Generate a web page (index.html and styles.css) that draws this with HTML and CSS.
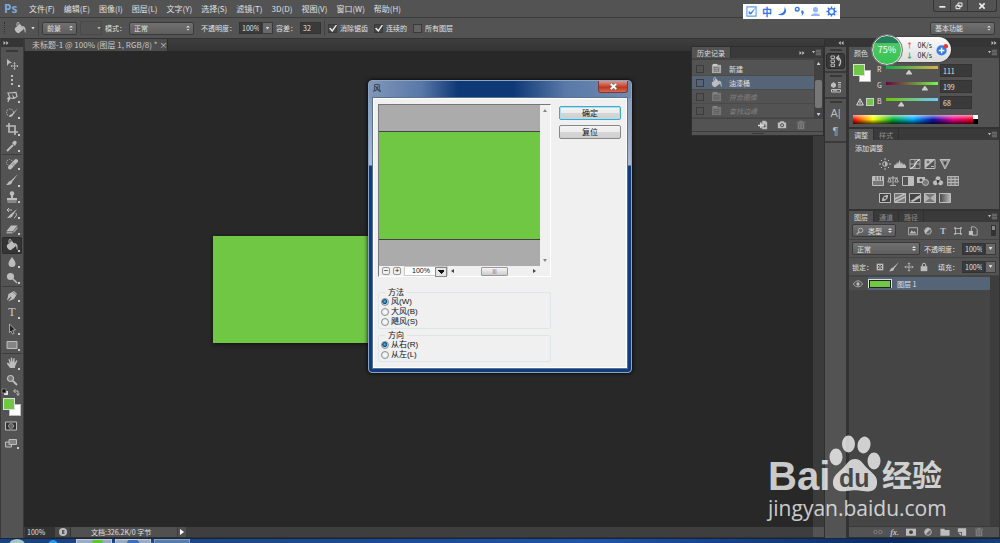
FILE: index.html
```html
<!DOCTYPE html>
<html lang="zh-CN">
<head>
<meta charset="utf-8">
<title>未标题-1 @ 100% (图层 1, RGB/8)</title>
<link rel="stylesheet" href="styles.css">
</head>
<body>
<svg class="defs" aria-hidden="true">
  <symbol id="i-move" viewBox="0 0 12 12"><path d="M1 1l5 4-3 .3L1 8z"/><path d="M8.500 4.500v7M5 8h7M7.500 5.500l1-1 1 1M7.500 10.500l1 1 1-1M6 7L5 8l1 1M11 7l1 1-1 1" fill="none" stroke="currentColor" stroke-width=".8"/></symbol>
  <symbol id="i-marquee" viewBox="0 0 12 12"><path d="M6 1v10" fill="none" stroke="currentColor" stroke-width="2" stroke-dasharray="2 2"/></symbol>
  <symbol id="i-lasso" viewBox="0 0 12 12"><path d="M2 2l8-.5 1 4-3 2-4-.5zM4 7c-2-1-3 1-1.500 1.500C4 9 4 7 3 7l-1 4" fill="none" stroke="currentColor" stroke-width="1.200"/><path d="M6 3l3 4-2 0z"/></symbol>
  <symbol id="i-quick" viewBox="0 0 12 12"><circle cx="4" cy="5.500" r="3.500" fill="none" stroke="currentColor" stroke-dasharray="1.500 1"/><path d="M12 1L7 8c-1 2-3 2-4 2 1-1 1-3 3-3z"/></symbol>
  <symbol id="i-crop" viewBox="0 0 12 12"><path d="M3 0v9h9M0 3h9v9" fill="none" stroke="currentColor" stroke-width="1.600"/></symbol>
  <symbol id="i-dropper" viewBox="0 0 12 12"><path d="M7 2c2-3 5 0 3 2L9 6 6 3z"/><path d="M7 5l-5 5-1 1" fill="none" stroke="currentColor" stroke-width="2"/></symbol>
  <symbol id="i-heal" viewBox="0 0 12 12"><circle cx="3.500" cy="4.500" r="3" fill="none" stroke="currentColor" stroke-dasharray="1.200 1"/><path d="M4 9.500l6-6.500" stroke="currentColor" stroke-width="4" stroke-linecap="round"/><path d="M5.500 6l3 3M7 4.500l2.500 2.500" stroke="#666" stroke-width=".7"/></symbol>
  <symbol id="i-brush" viewBox="0 0 12 12"><path d="M12 0L6 8c0 3-4 3-6 3 2-1 2-4 4.500-4z"/></symbol>
  <symbol id="i-stamp" viewBox="0 0 12 12"><circle cx="6" cy="2.500" r="2.300"/><path d="M5 4h2v3h4v2.500H1V7h4zM1.500 10.500h9v1h-9z"/></symbol>
  <symbol id="i-hbrush" viewBox="0 0 12 12"><path d="M11 2L7 8c-1 3-4 3-6 3 2-1 2-3 4-4z"/><path d="M1 3h5M3 1L1 3l2 2M10 6c1 2 0 4-2 5" fill="none" stroke="currentColor"/></symbol>
  <symbol id="i-eraser" viewBox="0 0 12 12"><path d="M5 2.500h6.500L7 8H.5z"/><path d="M.5 8.500h6v2h-6zM7.300 8.300L11.500 3.500v2.200l-4 4.600z" opacity=".75"/></symbol>
  <symbol id="i-bucket" viewBox="0 0 12 12"><path d="M1 6l5-4 4 5-5 4c-2 1-5-3-4-5z"/><path d="M5 5V1.500C5 0 3 0 3 1.500V4" fill="none" stroke="currentColor"/><path d="M8 4c3 0 4 2 3.500 7C10 10 11 7 9 6z"/></symbol>
  <symbol id="i-drop" viewBox="0 0 12 12"><path d="M6 1c1 2 3.500 4 3.500 6.500a3.500 3.500 0 0 1-7 0C2.500 5 5 3 6 1z"/></symbol>
  <symbol id="i-dodge" viewBox="0 0 12 12"><circle cx="4.500" cy="4.500" r="3.600"/><path d="M7 7l4 4" stroke="currentColor" stroke-width="1.500"/></symbol>
  <symbol id="i-pen" viewBox="0 0 12 12"><path d="M8 1l3 3-3 5-6 2.500 3.500-4-.8-.7L1 10.500 2.500 4z"/><path d="M7 2l4 3.500" stroke="#535353" stroke-width=".6"/></symbol>
  <symbol id="i-select" viewBox="0 0 12 12"><path d="M3.500 1l6 6-2.800.2L8 10.500l-1.500.6L5 8 3.500 9.500z" fill="#222" stroke="currentColor" stroke-width=".8"/></symbol>
  <symbol id="i-rect" viewBox="0 0 12 12"><path d="M1 2.500h10v7H1z" fill="#858585" stroke="currentColor"/></symbol>
  <symbol id="i-hand" viewBox="0 0 12 12"><path d="M4 11L.8 6.500c0-1 1.200-1 3 .8L2.500 2.500c.3-.8 1.200-.5 1.300 0L5 5.500 4.800 1c.4-.8 1.300-.6 1.400 0L6.600 5.500 7.500 1.500c.5-.7 1.300-.4 1.200.3L8.500 6l1.700-2.500c.8-.4 1.200.2 1 .8L9 9.500V11z"/></symbol>
  <symbol id="i-zoom" viewBox="0 0 12 12"><circle cx="4.500" cy="4.500" r="3" fill="#777" stroke="currentColor" stroke-width="1.200"/><path d="M7 7l4 4" stroke="currentColor" stroke-width="1.800"/></symbol>
  <symbol id="i-mask" viewBox="0 0 12 12"><path d="M.5 2h11v8H.5z" fill="#333" stroke="currentColor"/><circle cx="6" cy="6" r="2.500" fill="#666" stroke="currentColor" stroke-dasharray="1 .6"/></symbol>
  <symbol id="i-screen" viewBox="0 0 12 12"><path d="M.5 5h6v5h-6z" fill="#666" stroke="currentColor"/><path d="M4 2.500h7.500v5H4z" fill="#858585" stroke="currentColor"/></symbol>
  <symbol id="i-doc" viewBox="0 0 12 12"><path d="M1 2h10v9H1z" fill="#aaa"/><path d="M2 1h5v2H2z" fill="#ccc"/><path d="M3 4.500h6v5H3z" fill="#777"/><path d="M4 6h4M4 8h4" stroke="#bbb" stroke-width=".7"/></symbol>
  <symbol id="i-newdoc" viewBox="0 0 12 12"><path d="M5 1h4l2 2v8H5z" fill="#bbb"/><path d="M0 6.500h7M3.500 3v7" stroke="#ddd" stroke-width="1.800"/><path d="M8 5v4M6.500 7.500h3.500" stroke="#444" stroke-width=".8"/></symbol>
  <symbol id="i-camera" viewBox="0 0 12 12"><path fill-rule="evenodd" d="M1 3h2l1-1.500h4L9 3h2v7H1zM6 4a2.300 2.300 0 1 0 .1 0z"/><circle cx="6" cy="6.300" r="1.200"/></symbol>
  <symbol id="i-trash" viewBox="0 0 12 12"><path d="M2 4h8v7H2zM1 2h10v1.200H1zM4 1h4v1H4z" opacity=".8"/><path d="M4.500 5v5M7.500 5v5" stroke="#444" stroke-width=".8"/></symbol>
  <symbol id="i-history" viewBox="0 0 12 12"><path d="M1 1h3.500v2.500H1zM1 5h3.500v2.500H1zM1 9h3.500v2.500H1z" fill="none" stroke="currentColor" stroke-width=".9"/><path d="M7 3h2c2 2 2 5 0 8M9 .5L6.500 3 9 5.500" fill="none" stroke="currentColor" stroke-width="1.400"/></symbol>
  <symbol id="i-props" viewBox="0 0 12 12"><path d="M1 3l2.500-2L6 3v2.500L3.500 7 1 5.500zM8 1h3v1.200H8zM8 3.200h3v1.200H8zM8 5.400h3v1.200H8z"/><path d="M1.500 8.500h9v2.500h-9z" fill="none" stroke="currentColor"/><path d="M3 9.800h4" stroke="currentColor"/></symbol>
  <symbol id="i-sun" viewBox="0 0 12 12"><circle cx="6" cy="6" r="2.300" fill="none" stroke="currentColor"/><path d="M6 0v2M6 10v2M0 6h2M10 6h2M2 2l1 1M9 9l1 1M2 10l1-1M9 3l1-1" stroke="currentColor"/><path d="M6 4a2 2 0 0 1 0 4z"/></symbol>
  <symbol id="i-levels" viewBox="0 0 12 12"><path d="M0 10V8l1-2 1 1 1-3 1 2 1.500-4L7 6l1-2 1 3 1-1.500L12 8v2z"/></symbol>
  <symbol id="i-curves" viewBox="0 0 12 12"><path d="M1 1.500h10v9H1zM1 6h10M6 1.500v9" fill="none" stroke="currentColor" stroke-width=".8"/><path d="M1 10.500C7 10 5 3 11 1.500" fill="none" stroke="#ddd" stroke-width="1.200"/></symbol>
  <symbol id="i-expo" viewBox="0 0 12 12"><path d="M1 1.500h10v9H1z" fill="none" stroke="currentColor"/><path d="M1 10.500L11 1.500H1z"/><path d="M2.500 4h3M4 2.500v3" stroke="#444" stroke-width=".8"/><path d="M7 8.500h3" stroke="currentColor"/></symbol>
  <symbol id="i-vib" viewBox="0 0 12 12"><path d="M1 1.500h10L6 11z" fill="#999" stroke="currentColor"/><path d="M4 3.500h4L6 8z" fill="#444"/></symbol>
  <symbol id="i-hue" viewBox="0 0 12 12"><path d="M.5 1.500h11v9H.5z" fill="#777" stroke="currentColor"/><path d="M1 2h10v4H1z"/><path d="M4 1.500v4M7 1.500v4M9.500 1.500v4" stroke="#444" stroke-width=".8"/></symbol>
  <symbol id="i-balance" viewBox="0 0 12 12"><path d="M6 1v9M3 10.500h6M1 3h10M2.500 3L.8 7h3.500zM9.500 3L7.800 7h3.500z" fill="none" stroke="currentColor" stroke-width=".9"/></symbol>
  <symbol id="i-bw" viewBox="0 0 12 12"><path d="M.5 1.500h11v9H.5z" fill="none" stroke="currentColor"/><path d="M6 2h5v8H6z"/></symbol>
  <symbol id="i-photo" viewBox="0 0 12 12"><path d="M0 2h8v6H0z"/><circle cx="4" cy="5" r="1.500" fill="#444"/><circle cx="8.500" cy="7.500" r="3" fill="#777" stroke="currentColor"/></symbol>
  <symbol id="i-mixer" viewBox="0 0 12 12"><g stroke="#444" stroke-width=".8"><circle cx="6" cy="3.800" r="3"/><circle cx="3.500" cy="7.800" r="3"/><circle cx="8.500" cy="7.800" r="3"/></g><circle cx="6" cy="6.500" r="1.300" fill="#333"/></symbol>
  <symbol id="i-grid" viewBox="0 0 12 12"><path d="M.5 1.500h11v9H.5zM.5 4.500h11M.5 7.500h11M4 1.500v9M8 1.500v9" fill="#777" stroke="currentColor" stroke-width=".9"/></symbol>
  <symbol id="i-invert" viewBox="0 0 12 12"><path d="M.5 1.500h11v9H.5z" fill="#444" stroke="currentColor"/><path d="M3 9c0-4 2-6 6-6 0 4-2 6-6 6z"/><circle cx="6" cy="6" r="1.300" fill="#555"/></symbol>
  <symbol id="i-poster" viewBox="0 0 12 12"><path d="M.5 1.500h11v9H.5z" fill="#777" stroke="currentColor"/><path d="M1 7l10-5M1 10l10-5" stroke="currentColor" stroke-width="1.500"/></symbol>
  <symbol id="i-thresh" viewBox="0 0 12 12"><path d="M.5 1.500h11v9H.5z" fill="#444" stroke="currentColor"/><path d="M1 9l4-2 2-2 4-2v3L7 8l-3 2z"/></symbol>
  <symbol id="i-selcol" viewBox="0 0 12 12"><path d="M.5 1.500h11v9H.5z" fill="#777" stroke="currentColor"/><path d="M1 2l5 4-5 4zM11 2L6 6l5 4z" opacity=".8"/></symbol>
  <symbol id="i-gmap" viewBox="0 0 12 12"><linearGradient id="gm"><stop stop-color="#444"/><stop offset="1" stop-color="#bbb"/></linearGradient><path d="M.5 1.500h11v9H.5z" fill="url(#gm)" stroke="currentColor"/></symbol>
  <symbol id="i-image" viewBox="0 0 12 12"><path d="M.5 2h11v8.500H.5z" fill="none" stroke="currentColor"/><path d="M2 9l2.500-4 2 2.500L8 6l2 3z"/></symbol>
  <symbol id="i-half" viewBox="0 0 12 12"><circle cx="6" cy="6" r="4" fill="#666" stroke="currentColor"/><path d="M3 9a4.300 4.300 0 0 1 6-6z"/></symbol>
  <symbol id="i-shape" viewBox="0 0 12 12"><path d="M3 3h6v6H3z" fill="none" stroke="currentColor"/><path d="M1.500 1.500h2v2h-2zM8.500 1.500h2v2h-2zM1.500 8.500h2v2h-2zM8.500 8.500h2v2h-2z"/></symbol>
  <symbol id="i-smart" viewBox="0 0 12 12"><path d="M4 1h4l3 3v7H5V7H4z" fill="none" stroke="currentColor"/><path d="M1 6h5v5H1z"/></symbol>
  <symbol id="i-checker" viewBox="0 0 12 12"><path d="M1 1h10v10H1z"/><path d="M3 3h2v2H3zM7 3h2v2H7zM5 5h2v2H5zM3 7h2v2H3zM7 7h2v2H7z" fill="#444"/></symbol>
  <symbol id="i-arrows" viewBox="0 0 12 12"><path d="M6 1v10M1 6h10M4.500 2.500L6 1l1.500 1.500M4.500 9.500L6 11l1.500-1.500M2.500 4.500L1 6l1.500 1.500M9.500 4.500L11 6 9.500 7.500" fill="none" stroke="currentColor"/></symbol>
  <symbol id="i-lock" viewBox="0 0 12 12"><path d="M2 5h8v6H2z"/><path d="M4 5V3.500a2 2 0 0 1 4 0V5" fill="none" stroke="currentColor" stroke-width="1.200"/></symbol>
  <symbol id="i-search" viewBox="0 0 12 12"><circle cx="7" cy="5" r="3.300" fill="none" stroke="currentColor" stroke-width="1.300"/><path d="M4.500 7.500L1 11" stroke="currentColor" stroke-width="1.600"/></symbol>
  <symbol id="i-eye" viewBox="0 0 12 12"><path d="M.5 6c3-5 8-5 11 0-3 4.500-8 4.500-11 0z" fill="none" stroke="currentColor"/><circle cx="6" cy="6" r="2"/></symbol>
  <symbol id="i-link" viewBox="0 0 12 12"><path d="M5 4H3a2 2 0 0 0 0 4h2M7 4h2a2 2 0 0 1 0 4H7M4 6h4" fill="none" stroke="currentColor"/></symbol>
  <symbol id="i-addmask" viewBox="0 0 12 12"><path d="M0 2h12v8.500H0z"/><circle cx="6" cy="6.200" r="2.300" fill="#444"/></symbol>
  <symbol id="i-folder" viewBox="0 0 12 12"><path d="M.5 2H5l1 1.500h5.500v7H.5z"/></symbol>
  <symbol id="i-page" viewBox="0 0 12 12"><path d="M1 1.500h10v9H6V6H1z"/><path d="M1.500 7H5v3.500z"/></symbol>
  <symbol id="i-menu" viewBox="0 0 12 12"><path d="M0 4h4L2 7z"/><path d="M5 3h7M5 5h7M5 7h7M5 9h7" stroke="currentColor" stroke-width="1" opacity=".6"/></symbol>
  <symbol id="i-dbl" viewBox="0 0 12 12"><path d="M1 2l4.500 4L1 10zM6.500 2L11 6l-4.500 4z"/></symbol>
</svg>

<div class="app">
  <header class="menubar">
    <span class="logo">Ps</span>
    <nav class="menus">
      <a href="#">文件(F)</a><a href="#">编辑(E)</a><a href="#">图像(I)</a><a href="#">图层(L)</a><a href="#">文字(Y)</a><a href="#">选择(S)</a><a href="#">滤镜(T)</a><a href="#">3D(D)</a><a href="#">视图(V)</a><a href="#">窗口(W)</a><a href="#">帮助(H)</a>
    </nav>
    <div class="winbtns">
      <button aria-label="最小化"><svg viewBox="0 0 12 12"><path d="M2 6h9v2.500H2z"/></svg></button>
      <button aria-label="还原"><svg viewBox="0 0 12 12"><path d="M4.500 1.500h6v5h-6zM1.500 5h6v5h-6z" fill="#535353" stroke="currentColor" stroke-width="1.500"/></svg></button>
      <button class="wide" aria-label="关闭"><svg viewBox="0 0 12 12"><path d="M2 2l8 8M10 2l-8 8" stroke="currentColor" stroke-width="2.400"/></svg></button>
    </div>
  </header>

  <form class="options">
    <span class="vgrip"></span>
    <svg class="ic tool-ic"><use href="#i-bucket"/></svg>
    <span class="tri"></span>
    <span class="sep"></span>
    <span class="sel w-s"><select aria-label="填充源"><option>前景</option></select></span>
    <span class="pattern"><i class="tri"></i></span>
    <label class="field" for="mode">模式：</label>
    <span class="sel w-m"><select id="mode"><option>正常</option></select></span>
    <label class="field gap-l" for="opa">不透明度：</label>
    <span class="combo"><input id="opa" value="100%"><button type="button" aria-label="不透明度滑块"><i class="tri"></i></button></span>
    <label class="field" for="tol">容差：</label>
    <input id="tol" class="num" value="32">
    <span class="sep"></span>
    <label class="check"><input type="checkbox" checked>消除锯齿</label>
    <label class="check"><input type="checkbox" checked>连续的</label>
    <label class="check"><input type="checkbox">所有图层</label>
    <span class="sel w-m push"><select aria-label="工作区"><option>基本功能</option></select></span>
  </form>

  <main class="work">
    <aside class="tools">
      <div class="strip"><svg class="ic xs"><use href="#i-dbl"/></svg></div>
      <span class="grip"></span>
      <div class="tgroup g6">
        <button aria-label="移动" class="plain"><svg class="ic"><use href="#i-move"/></svg></button>
        <button aria-label="选框"><svg class="ic"><use href="#i-marquee"/></svg></button>
        <button aria-label="套索"><svg class="ic"><use href="#i-lasso"/></svg></button>
        <button aria-label="快速选择"><svg class="ic"><use href="#i-quick"/></svg></button>
        <button aria-label="裁剪"><svg class="ic"><use href="#i-crop"/></svg></button>
        <button aria-label="吸管"><svg class="ic"><use href="#i-dropper"/></svg></button>
      </div>
      <div class="tgroup g8">
        <button aria-label="修复画笔"><svg class="ic"><use href="#i-heal"/></svg></button>
        <button aria-label="画笔"><svg class="ic"><use href="#i-brush"/></svg></button>
        <button aria-label="图章"><svg class="ic"><use href="#i-stamp"/></svg></button>
        <button aria-label="历史画笔"><svg class="ic"><use href="#i-hbrush"/></svg></button>
        <button aria-label="橡皮擦"><svg class="ic"><use href="#i-eraser"/></svg></button>
        <button aria-label="油漆桶" class="on"><svg class="ic"><use href="#i-bucket"/></svg></button>
        <button aria-label="模糊"><svg class="ic"><use href="#i-drop"/></svg></button>
        <button aria-label="减淡"><svg class="ic"><use href="#i-dodge"/></svg></button>
      </div>
      <div class="tgroup g4">
        <button aria-label="钢笔"><svg class="ic"><use href="#i-pen"/></svg></button>
        <button class="type">T</button>
        <button aria-label="路径选择"><svg class="ic"><use href="#i-select"/></svg></button>
        <button aria-label="矩形"><svg class="ic"><use href="#i-rect"/></svg></button>
      </div>
      <div class="tgroup g2">
        <button aria-label="抓手"><svg class="ic"><use href="#i-hand"/></svg></button>
        <button aria-label="缩放" class="plain"><svg class="ic"><use href="#i-zoom"/></svg></button>
      </div>
      <svg class="swap" viewBox="0 0 20 8"><path d="M3 3h4v4H3z" fill="#ddd"/><path d="M1 1h4v4H1z" fill="#111" stroke="#999" stroke-width=".7"/><path d="M13 3h4v4M14.500 1L12.500 3l2 2M15.500 5.500l1.500 2 1.500-2" fill="none" stroke="#bbb"/></svg>
      <div class="swatches big"><i class="bg"></i><i class="fg"></i></div>
      <button aria-label="快速蒙版" class="plain modebtn"><svg class="ic"><use href="#i-mask"/></svg></button>
      <button aria-label="屏幕模式" class="modebtn"><svg class="ic"><use href="#i-screen"/></svg></button>
    </aside>

    <section class="doc">
      <div class="tabs"><div class="tab">未标题-1 @ 100% (图层 1, RGB/8) * <button aria-label="关闭文档">×</button></div></div>
      <div class="stage"><div class="canvas"></div></div>
      <div class="vscroll"></div>
      <footer class="status">
        <span class="pct">100%</span>
        <span class="cell"><svg class="ic sm"><circle cx="4" cy="4" r="4"/><path d="M3 2h2l1 1-2 1 2 1-1 1H3z" fill="#555"/></svg></span>
        <span class="info">文档:326.2K/0 字节</span>
        <button aria-label="状态菜单"><svg viewBox="0 0 8 8"><path d="M2 1l4 3-4 3z"/></svg></button>
        <span class="corner"></span>
      </footer>
    </section>

    <aside class="dock">
      <div class="strip end"><svg class="ic xs flip"><use href="#i-dbl"/></svg></div>
      <div class="dgroup"><span class="grip"></span><button class="on" aria-label="历史记录"><svg class="ic"><use href="#i-history"/></svg></button></div>
      <div class="dgroup"><span class="grip"></span><button aria-label="属性"><svg class="ic"><use href="#i-props"/></svg></button></div>
      <div class="dgroup"><span class="grip"></span><button class="glyph">A|</button><button class="glyph">¶</button></div>
    </aside>

    <aside class="panels">
      <div class="strip end"><svg class="ic xs"><use href="#i-dbl"/></svg></div>
      <section class="panel">
        <div class="ptabs"><button class="on">颜色</button><svg class="ic menu"><use href="#i-menu"/></svg></div>
        <div class="color">
          <div class="sw-col">
            <div class="swatches"><i class="bg"></i><i class="fg"></i></div>
            <div class="gamut"><svg viewBox="0 0 8 8"><path d="M4 .8L7.300 7H.7z" fill="none" stroke="#ddd"/><path d="M4 3v3" stroke="#ddd"/></svg><i></i></div>
          </div>
          <div class="sliders">
            <label for="r">R</label><input id="r" class="r" type="range" max="255" value="111"><input aria-label="R 值" class="num" value="111">
            <label for="g">G</label><input id="g" class="g" type="range" max="255" value="199"><input aria-label="G 值" class="num" value="199">
            <label for="b">B</label><input id="b" class="b" type="range" max="255" value="68"><input aria-label="B 值" class="num" value="68">
          </div>
          <div class="spectrum"><i></i></div>
        </div>
      </section>
      <section class="panel">
        <div class="ptabs"><button class="on">调整</button><button>样式</button><svg class="ic menu"><use href="#i-menu"/></svg></div>
        <div class="adjust">
          <p>添加调整</p>
          <div class="row"><svg class="ic"><use href="#i-sun"/></svg><svg class="ic"><use href="#i-levels"/></svg><svg class="ic"><use href="#i-curves"/></svg><svg class="ic"><use href="#i-expo"/></svg><svg class="ic"><use href="#i-vib"/></svg></div>
          <div class="row"><svg class="ic"><use href="#i-hue"/></svg><svg class="ic"><use href="#i-balance"/></svg><svg class="ic"><use href="#i-bw"/></svg><svg class="ic"><use href="#i-photo"/></svg><svg class="ic"><use href="#i-mixer"/></svg><svg class="ic"><use href="#i-grid"/></svg></div>
          <div class="row"><svg class="ic"><use href="#i-invert"/></svg><svg class="ic"><use href="#i-poster"/></svg><svg class="ic"><use href="#i-thresh"/></svg><svg class="ic"><use href="#i-selcol"/></svg><svg class="ic"><use href="#i-gmap"/></svg></div>
        </div>
      </section>
      <section class="panel layers">
        <div class="ptabs"><button class="on">图层</button><button>通道</button><button>路径</button><svg class="ic menu"><use href="#i-menu"/></svg></div>
        <div class="lrow">
          <span class="sel w-f"><svg class="ic sm lead"><use href="#i-search"/></svg><select aria-label="过滤类型"><option>类型</option></select></span>
          <span class="filters"><svg class="ic s10"><use href="#i-image"/></svg><svg class="ic s10"><use href="#i-half"/></svg><b>T</b><svg class="ic s10"><use href="#i-shape"/></svg><svg class="ic s10"><use href="#i-smart"/></svg></span>
          <span class="toggle"></span>
        </div>
        <div class="lrow">
          <span class="sel w-b"><select aria-label="混合模式"><option>正常</option></select></span>
          <label class="field push" for="lo">不透明度：</label>
          <span class="combo"><input id="lo" value="100%"><button aria-label="不透明度滑块"><i class="tri"></i></button></span>
        </div>
        <div class="lrow">
          <span class="field">锁定：</span>
          <span class="locks"><svg class="ic sm"><use href="#i-checker"/></svg><svg class="ic s10"><use href="#i-brush"/></svg><svg class="ic s10"><use href="#i-arrows"/></svg><svg class="ic s10"><use href="#i-lock"/></svg></span>
          <label class="field push" for="lf">填充：</label>
          <span class="combo"><input id="lf" value="100%"><button aria-label="填充滑块"><i class="tri"></i></button></span>
        </div>
        <div class="list">
          <div class="layer"><svg class="ic s10 eye"><use href="#i-eye"/></svg><span class="thumb"><i></i></span><span>图层 1</span></div>
        </div>
        <div class="lfoot"><svg class="ic s10 dim"><use href="#i-link"/></svg><em>fx.</em><svg class="ic s10"><use href="#i-addmask"/></svg><svg class="ic s10"><use href="#i-half"/></svg><svg class="ic s10"><use href="#i-folder"/></svg><svg class="ic s10"><use href="#i-page"/></svg><svg class="ic s10 dim"><use href="#i-trash"/></svg></div>
      </section>
    </aside>
  </main>

  <footer class="taskbar"><i class="orb"></i><i class="ie"></i><span class="task green"></span><span class="task"></span><span class="task dimmed"></span></footer>
</div>

<section class="history">
  <div class="ptabs"><button class="on">历史记录</button><svg class="ic xs"><use href="#i-dbl"/></svg><svg class="ic menu"><use href="#i-menu"/></svg></div>
  <div class="hbody">
    <ul>
      <li><i></i><svg class="ic"><use href="#i-doc"/></svg>新建</li>
      <li class="on"><i></i><svg class="ic"><use href="#i-bucket"/></svg>油漆桶</li>
      <li class="off"><i></i><svg class="ic"><use href="#i-doc"/></svg>拼合图像</li>
      <li class="off"><i></i><svg class="ic"><use href="#i-doc"/></svg>查找边缘</li>
    </ul>
    <div class="hscroll"><b class="up"></b><span></span><b class="down"></b></div>
  </div>
  <div class="hfoot"><svg class="ic s10"><use href="#i-newdoc"/></svg><svg class="ic s10"><use href="#i-camera"/></svg><svg class="ic s10 dim"><use href="#i-trash"/></svg></div>
  <span class="grip"></span>
</section>

<div class="ime">
  <svg viewBox="0 0 12 12"><path d="M1 1h10v10H1z" fill="none" stroke="#5e9cf5" stroke-width="1.200"/><path d="M3 9l0-4 2 2 6-6-5 8z" fill="#3b86f0"/></svg>
  <b>中</b>
  <svg viewBox="0 0 12 12"><path d="M8 1c5 5-1 12-7 8 5 0 8-3 7-8z" fill="#2f74ee"/></svg>
  <svg viewBox="0 0 12 12"><circle cx="3.500" cy="3.500" r="2" fill="none" stroke="#2f74ee" stroke-width="1.500"/><path d="M8 5c3-1 4 3 0 6 1-2 1-2 0-3z" fill="#2f74ee"/></svg>
  <svg viewBox="0 0 12 12"><circle cx="6" cy="4" r="2.800" fill="#93b8f6"/><path d="M1 11c0-4 10-4 10 0z" fill="#93b8f6"/></svg>
  <svg viewBox="0 0 12 12"><circle cx="6" cy="6" r="3.200" fill="none" stroke="#2f74ee" stroke-width="1.500"/><path d="M6 .5v2M6 9.500v2M.5 6h2M9.500 6h2M2 2l1.500 1.500M8.500 8.500L10 10M2 10l1.500-1.500M8.500 3.500L10 2" stroke="#2f74ee" stroke-width="1.500"/></svg>
</div>

<div class="speed">
  <span class="ball">75%</span>
  <span class="rates"><i class="u">↑</i><span>0K/s</span><i class="d">↓</i><span>0K/s</span></span>
  <svg viewBox="0 0 14 14"><circle cx="6" cy="8" r="5.500" fill="#3a7de0"/><path d="M6 5v6M3 8h6" stroke="#fff" stroke-width="1.500"/><circle cx="10.500" cy="3.500" r="2.500" fill="#e23b32"/></svg>
</div>

<form class="dialog">
  <div class="title"><span>风</span><button type="button" aria-label="关闭"><svg viewBox="0 0 10 10"><path d="M2 2l6 6M8 2L2 8" stroke="#777" stroke-width="3.400"/><path d="M2 2l6 6M8 2L2 8" stroke="#fff" stroke-width="2"/></svg></button></div>
  <div class="client">
    <div class="left">
      <div class="preview">
        <div class="pic"><i></i></div>
        <div class="pv"><b class="up"></b><b class="down"></b></div>
        <div class="ph"><button type="button">−</button><button type="button">+</button><span class="dsel"><select aria-label="预览比例"><option>100%</option></select></span><b class="lt"></b><span class="hthumb">|||</span><b class="rt"></b></div>
      </div>
      <fieldset><legend>方法</legend>
        <label><input type="radio" name="m" checked>风(W)</label>
        <label><input type="radio" name="m">大风(B)</label>
        <label><input type="radio" name="m">飓风(S)</label>
      </fieldset>
      <fieldset><legend>方向</legend>
        <label><input type="radio" name="d" checked>从右(R)</label>
        <label><input type="radio" name="d">从左(L)</label>
      </fieldset>
    </div>
    <div class="btns"><button type="button" class="primary">确定</button><button type="button">复位</button></div>
  </div>
</form>

<div class="mark">
  <div class="brand"><span class="bai">Bai</span><span class="paw"><svg viewBox="0 0 54 57"><ellipse cx="8" cy="22" rx="6.500" ry="8.500"/><ellipse cx="20.500" cy="9" rx="6.500" ry="8.500"/><ellipse cx="36" cy="10" rx="6.500" ry="8.500" transform="rotate(12 36 10)"/><ellipse cx="46" cy="26" rx="6.500" ry="8.500"/><path d="M27 24c6 0 8 5 12 9 5 5 11 8 10 16-1 8-9 8-14 7-6-1-10-1-16 0-6 1-13 0-14-7-1-8 6-12 10-16 4-4 6-9 12-9z"/></svg><span class="du">du</span></span><span class="jy">经验</span></div>
  <div class="url">jingyan.baidu.com</div>
</div>
</body>
</html>
```
FILE: styles.css
```css
* { box-sizing: border-box; }

body {
  margin: 0;
  overflow: hidden;
  background: #282828;
  color: #e0e0e0;
  font: 7px/10px "Noto Sans CJK SC", "Open Sans", sans-serif;
}

button, input, select {
  margin: 0;
  padding: 0;
  border: 0;
  background: none;
  color: inherit;
  font: inherit;
  border-radius: 0;
  outline: 0;
}

a { color: inherit; text-decoration: none; }
svg { display: block; fill: currentColor; }
.defs { position: absolute; width: 0; height: 0; }
.ic { width: 12px; height: 12px; color: #bdbdbd; flex: none; }
.ic.xs { width: 6px; height: 6px; }
.ic.sm { width: 8px; height: 8px; }
.ic.s10 { width: 10px; height: 10px; }
.dim { opacity: .5; }
.flip { transform: scaleX(-1); }
.push { margin-left: auto; }

.app { display: flex; flex-direction: column; height: 100vh; }

/* Menu bar */
.menubar {
  display: flex;
  align-items: center;
  height: 18px;
  flex: none;
  background: #535353;
  border-bottom: 1px solid #3c3c3c;
}
.logo {
  width: 29px;
  padding-left: 4px;
  color: #79a9d9;
  font: bold 12px/16px "Open Sans", sans-serif;
}
.menus { display: flex; gap: 9px; font-size: 8px; }
.winbtns { display: flex; margin: 0 3px 5px auto; border: 1px solid #333; border-top: 0; border-radius: 0 0 3px 3px; }
.winbtns button { display: grid; place-items: center; width: 17px; height: 11px; color: #eee; border-right: 1px solid #3c3c3c; }
.winbtns .wide { width: 28px; border-right: 0; }
.winbtns svg { width: 8px; height: 8px; }

/* Tool options */
.options {
  display: flex;
  align-items: center;
  gap: 3px;
  height: 21px;
  flex: none;
  padding: 0 5px 0 4px;
  background: #535353;
  border-bottom: 1px solid #333;
}
.vgrip { width: 2px; height: 12px; border-left: 1px dotted #333; margin-right: 5px; }
.tri { width: 4px; height: 3px; background: #ddd; clip-path: polygon(0 0, 100% 0, 50% 100%); }
.tool-ic { margin-right: 2px; }
.sep { width: 1px; height: 16px; background: #444; }
.sel {
  position: relative;
  display: flex;
  align-items: center;
  height: 13px;
  border: 1px solid #3a3a3a;
  border-radius: 2px;
  background: linear-gradient(#707070, #5e5e5e);
}
.sel select { appearance: none; flex: 1; min-width: 0; height: 11px; padding: 0 8px 0 4px; }
.sel::before, .sel::after {
  content: "";
  position: absolute;
  right: 3px;
  width: 4px;
  height: 2px;
  background: #ddd;
}
.sel::before { top: 3px; clip-path: polygon(50% 0, 100% 100%, 0 100%); }
.sel::after { top: 6px; clip-path: polygon(0 0, 100% 0, 50% 100%); }
.w-s { width: 35px; }
.w-m { width: 65px; }
.w-f { width: 44px; }
.w-b { width: 68px; }
.lead { margin-left: 3px; }
.pattern { display: flex; align-items: center; justify-content: flex-end; width: 22px; height: 14px; border: 1px solid #474747; opacity: .7; }
.gap-l { margin-left: 4px; }
.field { white-space: nowrap; }
.combo { display: flex; }
.combo input { width: 23px; height: 12px; padding: 0 2px; background: #3a3a3a; border: 1px solid #333; }
.combo button { display: grid; place-items: center; width: 11px; height: 12px; background: #686868; border: 1px solid #3a3a3a; }
.num { width: 21px; height: 12px; padding: 0 2px; background: #3a3a3a; border: 1px solid #333; }
.check { display: flex; align-items: center; gap: 3px; margin-right: 3px; }
.check input { appearance: none; display: grid; place-items: center; width: 9px; height: 9px; border: 1px solid #3a3a3a; background: #636363; }
.check input:checked { background: #454545; }
.check input:checked::after { content: ""; width: 8px; height: 8px; background: #eee; clip-path: polygon(0 50%, 18% 40%, 40% 65%, 88% 0, 100% 8%, 42% 95%); }

/* Work area */
.work { display: grid; grid-template-columns: 24px minmax(0, 1fr) 24px 152px; flex: 1; min-height: 0; }
.strip { display: flex; align-items: center; height: 8px; padding: 0 2px; background: #353535; flex: none; }
.strip.end { justify-content: flex-end; padding-right: 2px; }
.grip { display: block; width: 12px; height: 2px; margin: 3px auto 0; background: #383838; flex: none; }

.tools { display: flex; flex-direction: column; background: #535353; border-left: 1px solid #3a3a3a; border-right: 1px solid #3a3a3a; }
.tools button { position: relative; display: grid; place-items: center; width: 20px; }
.tgroup button { flex: 1; min-height: 0; }
.tools button::after { content: ""; position: absolute; right: 2px; bottom: 2px; width: 2px; height: 2px; background: #ccc; }
.tools button.plain::after { display: none; }
.tools .on { background: #353535; border-radius: 2px; box-shadow: 0 0 0 1px #2c2c2c inset; }
.tgroup { display: flex; flex-direction: column; margin: 0 1px; border-bottom: 1px solid #3d3d3d; }
.g6 { height: 99px; margin-top: 4px; }
.g8 { height: 132px; padding-top: 1px; }
.g4 { height: 67px; padding-top: 1px; }
.g2 { height: 34px; padding-top: 1px; border-bottom: 0; }
.tools .type { font: 12px/14px "Liberation Serif", serif; color: #c8c8c8; }
.swap { width: 20px; height: 8px; }
.swatches { position: relative; width: 18px; height: 18px; }
.swatches i { position: absolute; width: 12px; height: 12px; }
.swatches .fg { left: 0; top: 0; background: #6fc744; border: 1px solid #ddd; }
.swatches .bg { right: 0; bottom: 0; background: #fff; border: 1px solid #bbb; }
.swatches.big { margin: 2px 0 1px 2px; }
.modebtn { height: 17px; }

.doc { display: grid; grid-template: 12px minmax(0, 1fr) 11px / minmax(0, 1fr) 11px; background: #282828; }
.tabs { grid-column: 1 / 3; display: flex; background: linear-gradient(#3e3e3e, #343434); padding-left: 1px; }
.tab { display: flex; align-items: center; gap: 2px; padding: 0 3px 0 7px; background: #4c4c4c; border-right: 1px solid #2c2c2c; font-size: 8px; color: #c8c8c8; }
.tab button { width: 5px; }
.stage { display: grid; place-items: center; }
.canvas { width: 52%; height: 107px; background: #6fc744; box-shadow: 0 1px 4px #111; }
.vscroll { background: #3b3b3b; }
.status { grid-column: 1 / 3; display: flex; background: #3e3e3e; border-bottom: 1px solid #303030; padding-left: 1px; }
.status .pct { width: 30px; padding-left: 2px; background: #333; }
.status .cell { display: grid; place-items: center; width: 16px; background: #484848; border-right: 1px solid #333; }
.status .info { width: 107px; padding-left: 20px; background: #505050; border-right: 1px solid #3a3a3a; white-space: nowrap; }
.status button { background: #505050; color: #fff; }
.status button svg { width: 8px; height: 8px; }
.status .corner { width: 11px; margin-left: auto; background: #535353; }

.dock { display: flex; flex-direction: column; background: #535353; border-left: 1px solid #303030; border-right: 2px solid #333; }
.dgroup { display: grid; justify-items: center; gap: 2px; padding-bottom: 2px; border-bottom: 2px solid #3a3a3a; }
.dgroup .grip { margin-top: 2px; }
.dgroup button { display: grid; place-items: center; width: 19px; height: 16px; }
.dgroup .on { background: #383838; border-radius: 3px; border: 1px solid #2a2a2a; }
.dgroup .glyph { color: #bdbdbd; font: 11px/16px "Liberation Sans", sans-serif; }

.panels { display: flex; flex-direction: column; min-height: 0; background: #333; padding: 0 1px 0 1px; }
.panel { display: flex; flex-direction: column; background: #535353; margin-bottom: 2px; }
.ptabs { display: flex; align-items: center; height: 11px; background: #3a3a3a; color: #8c8c8c; flex: none; padding-right: 2px; }
.ptabs button { height: 11px; padding: 0 5px; border-right: 1px solid #303030; }
.ptabs .on { background: #535353; color: #ddd; }
.ptabs .menu { width: 9px; height: 9px; margin-left: auto; }

.color { display: grid; grid-template-columns: 24px 1fr; padding: 6px 21px 3px 4px; row-gap: 6px; }
.sw-col { display: flex; flex-direction: column; justify-content: space-between; }
.gamut { display: flex; align-items: center; gap: 2px; padding: 0 0 3px 3px; }
.gamut svg { width: 8px; height: 8px; }
.gamut i { width: 8px; height: 8px; background: #6fc744; border: 1px solid #ccc; }
.sliders { display: grid; grid-template-columns: 7px 52px 32px; column-gap: 2px; row-gap: 3px; }
.sliders label { font-size: 7px; line-height: 10px; }
.sliders .num { width: 32px; height: 13px; }
.sliders input[type=range] { appearance: none; width: 52px; height: 11px; }
input[type=range]::-webkit-slider-runnable-track { height: 10px; background: var(--track) 0 1px / 100% 3px no-repeat; }
input[type=range]::-webkit-slider-thumb { appearance: none; width: 6px; height: 5px; margin-top: 5px; background: #ccc; clip-path: polygon(50% 0, 100% 80%, 100% 100%, 0 100%, 0 80%); }
.r { --track: linear-gradient(90deg, #00c744cc, #ffc744cc); }
.g { --track: linear-gradient(90deg, #6f0044, #6fff44); }
.b { --track: linear-gradient(90deg, #6fc700, #6fc7ff); }
.spectrum {
  grid-column: 1 / 3;
  display: flex;
  justify-content: flex-end;
  height: 9px;
  background: linear-gradient(#fff9, #0000 50%, #000b), linear-gradient(90deg, #f00, #ff0 16%, #0a3 32%, #0af 48%, #11a 64%, #e08 80%, #e00);
}
.spectrum i { width: 5px; background: linear-gradient(#fff 50%, #000 50%); }

.adjust { padding: 3px 0 0 4px; }
.adjust p { margin: 0 0 5px 2px; }
.adjust .row { display: flex; justify-content: center; gap: 3px; height: 17px; padding-right: 22px; }

.layers { flex: 1; min-height: 0; margin: 0; }
.lrow { display: flex; align-items: center; gap: 3px; height: 18px; padding: 0 3px; border-bottom: 1px solid #444; flex: none; }
.filters, .locks { display: flex; align-items: center; gap: 5px; }
.filters { margin-left: 9px; }
.filters b { width: 10px; text-align: center; font: bold 9px/10px "Liberation Serif", serif; color: #bdbdbd; }
.toggle { width: 5px; height: 11px; margin-left: auto; background: linear-gradient(#888 50%, #333 50%); border: 1px solid #333; }
.list { flex: 1; min-height: 0; padding: 1px 9px 0 0; background: linear-gradient(90deg, #454545 141px, #3d3d3d 141px); }
.layer { display: flex; align-items: center; gap: 5px; height: 13px; padding-left: 4px; background: linear-gradient(90deg, #4d4d4d 19px, #566477 19px); }
.thumb { display: grid; place-items: center; width: 24px; height: 9px; border: 1px solid #ddd; }
.thumb i { width: 20px; height: 6px; background: #6fc744; outline: 1px solid #222; }
.lfoot { display: flex; align-items: center; justify-content: flex-end; gap: 7px; height: 12px; padding-right: 15px; border-top: 1px solid #3a3a3a; border-bottom: 1px solid #303030; flex: none; }
.lfoot em { font: italic 9px/10px "Liberation Serif", serif; }

.taskbar { display: flex; height: 5px; flex: none; overflow: hidden; gap: 3px; border-top: 1px solid #16243c; background: linear-gradient(90deg, #1b4280, #1c4c94 40%, #1d55a5 60%, #0a2a66 90%, #16407c); }
.taskbar .orb { width: 16px; height: 12px; margin-left: 9px; border-radius: 50%; background: #a8c4cc; }
.taskbar .ie { width: 10px; height: 10px; margin: 1px 15px 0 20px; border-radius: 50%; background: #2196f3; }
.task { width: 36px; height: 8px; background: radial-gradient(circle at 50% 80%, #3b70b5 6px, #9aabc4 7px); border: 1px solid #c0cbdb; }
.task.green { background: radial-gradient(circle at 60% 30%, #5cc52f 4px, #9aabc4 6px); }
.task.dimmed { background: #557cad; border-color: #86a2c6; }

/* History panel */
.history { position: absolute; right: 177px; top: 47px; width: 131px; background: #535353; outline: 1px solid #2f2f2f; }
.history .ptabs .xs { margin-left: auto; margin-right: 7px; }
.history .ptabs .menu { margin-left: 0; }
.hbody { display: flex; border-top: 2px solid #444; }
.history ul { flex: 1; margin: 0; padding: 2px 0 0; list-style: none; }
.history li { display: flex; align-items: center; gap: 7px; height: 14px; padding-left: 4px; border-bottom: 1px solid #4a4a4a; }
.history li i { width: 8px; height: 8px; border: 1px solid #3c3c3c; }
.history li .ic { width: 11px; height: 11px; }
.history .on { background: #566477; }
.history .ptabs .on { background: #535353; }
.history .off { color: #808080; font-style: italic; }
.history .off .ic { opacity: .4; }
.hscroll { display: flex; flex-direction: column; align-items: center; justify-content: space-between; width: 9px; padding: 2px 0; background: #424242; }
.hscroll span { width: 7px; height: 28px; margin-top: 10px; border-radius: 2px; background: #777; }
.up, .down { width: 4px; height: 3px; background: #ccc; clip-path: polygon(50% 0, 100% 100%, 0 100%); }
.down { clip-path: polygon(0 0, 100% 0, 50% 100%); }
.hfoot { display: flex; align-items: center; justify-content: flex-end; gap: 9px; height: 14px; padding-right: 17px; border-top: 1px solid #444; border-bottom: 1px solid #3c3c3c; }
.history > .grip { margin: 1px auto; height: 1px; }

/* Floating desktop widgets */
.ime { position: absolute; right: 160px; top: 4px; display: flex; align-items: center; justify-content: space-around; width: 97px; height: 15px; background: #fff; color: #2f74ee; }
.ime svg { width: 11px; height: 11px; }
.ime b { font-size: 10px; line-height: 14px; }
.speed { position: absolute; right: 49px; top: 37px; display: flex; align-items: center; gap: 4px; width: 76px; height: 25px; padding-right: 2px; border-radius: 13px; background: linear-gradient(#fafafa, #ddd); color: #222; box-shadow: 0 0 2px #222; }
.ball { display: grid; place-items: center; flex: none; width: 30px; height: 30px; margin-left: -3px; border-radius: 50%; border: 1px solid #d9e6da; outline: 1px solid #777; background: linear-gradient(#23805a 25%, #4cc764 27%, #38c455); color: #fff; font-size: 9px; }
.rates { display: grid; grid-template-columns: 8px 1fr; flex: 1; text-align: right; }
.rates i { font-style: normal; font-weight: bold; text-align: left; }
.rates .u { color: #e8553c; }
.rates .d { color: #22a05a; }
.speed svg { width: 13px; height: 13px; flex: none; }

/* Filter dialog */
.dialog {
  position: absolute;
  left: 368px;
  top: 80px;
  width: 264px;
  padding: 1px 4px 4px;
  border: 1px solid #8da5c5;
  border-radius: 4px;
  background: linear-gradient(#7d95b8, #a9bad3 84px, #123c7c 85px);
  color: #111;
  font: 8px/10px "Liberation Sans", "Noto Sans CJK SC", sans-serif;
  box-shadow: 0 0 4px #000;
}
.title { display: flex; justify-content: space-between; height: 17px; margin: -1px -4px 0; padding-left: 4px; border-radius: 3px 3px 0 0; background: linear-gradient(90deg, #8097b9, #5878a8 20%, #0f3877 34%, #0f3877 55%, #5979a8 75%, #718bb0); }
.title span { line-height: 16px; }
.title button { display: grid; place-items: center; width: 30px; height: 12px; margin-right: 3px; border: 1px solid #7c3a35; border-top: 0; border-radius: 0 0 3px 3px; background: linear-gradient(#d9968c, #c6452f 50%, #b83420 55%, #d86a50); }
.title svg { width: 9px; height: 9px; }
.client { display: flex; gap: 8px; padding: 5px 4px 3px; border: 1px solid #fff; background: #f0f0f0; outline: 1px solid #566f95; }
.left { width: 173px; }
.preview { display: grid; grid-template: 161px 10px / minmax(0, 1fr) 10px; border: 1px solid #fff; border-left-color: #777; border-top-color: #777; margin-bottom: 11px; }
.pic { padding: 26px 0; background: #ababab; }
.pic i { display: block; height: 109px; background: #6fc744; border-top: 1px solid #444; border-bottom: 1px solid #444; }
.pv { display: flex; flex-direction: column; align-items: center; justify-content: space-between; padding: 4px 0; }
.pv b { background: #888; }
.ph { display: flex; align-items: center; gap: 3px; grid-column: 1 / 3; padding-left: 3px; }
.ph button { display: grid; place-items: center; width: 8px; height: 8px; border: 1px solid #999; border-radius: 2px; font-size: 8px; line-height: 6px; }
.dsel { position: relative; display: flex; width: 44px; height: 10px; background: #fff; border: 1px solid #ccc; }
.dsel select { appearance: none; width: 100%; padding-left: 7px; font-size: 7px; line-height: 8px; }
.dsel::after { content: ""; position: absolute; right: 0; top: 0; width: 10px; height: 8px; border: 1px solid #888; background: conic-gradient(from -45deg at 50% 80%, #111 25%, #e5e5e5 0) center / 6px 5px no-repeat, #e5e5e5; }
.ph .lt, .ph .rt { width: 3px; height: 4px; background: #444; clip-path: polygon(0 50%, 100% 0, 100% 100%); }
.ph .rt { clip-path: polygon(0 0, 100% 50%, 0 100%); margin-left: 22px; }
.hthumb { width: 27px; height: 9px; margin-left: 24px; border: 1px solid #999; border-radius: 1px; background: linear-gradient(#f5f5f5, #ccc); font-size: 5px; line-height: 6px; text-align: center; color: #555; }
fieldset { margin: 0 0 2px; padding: 0 2px 2px; border: 1px solid #dce6e9; border-radius: 2px; }
legend { margin-left: 4px; padding: 0 3px; line-height: 9px; }
fieldset label { display: flex; align-items: center; gap: 2px; height: 9px; margin-bottom: 1px; line-height: 9px; }
fieldset label:last-child { margin-bottom: 0; }
fieldset input { appearance: none; width: 8px; height: 8px; border: 1px solid #8a9299; border-radius: 50%; background: radial-gradient(#fff, #ddd); }
fieldset input:checked { background: radial-gradient(circle at 45% 40%, #5cc4ee, #0b4a78 45%, #c8d4da 60%); }
.btns { display: flex; flex-direction: column; gap: 5px; padding-top: 2px; }
.btns button { width: 62px; height: 14px; border: 1px solid #888; border-radius: 2px; background: linear-gradient(#f4f4f4, #ebebeb 50%, #d6d6d6 50%, #d0d0d0); line-height: 11px; }
.btns .primary { border-color: #3fa9cc; box-shadow: inset 0 0 0 1px #a9dff0; }

/* Watermark */
.mark { position: absolute; right: 52px; top: 435px; width: 180px; color: #fff; opacity: .75; }
.brand { display: flex; align-items: flex-end; height: 57px; }
.bai { width: 60px; font: bold 40px/42px "Liberation Sans", sans-serif; height: 37px; }
.paw { position: relative; width: 54px; height: 57px; }
.paw svg { width: 54px; height: 57px; }
.du { position: absolute; left: 11px; bottom: 1px; color: #484848; font: bold 25px/26px "Liberation Sans", sans-serif; }
.jy { font: bold 30px/32px "Liberation Sans", "Noto Sans CJK SC", sans-serif; white-space: nowrap; }
.url { font: 21px/26px "Open Sans", sans-serif; margin-top: 3px; }
```
